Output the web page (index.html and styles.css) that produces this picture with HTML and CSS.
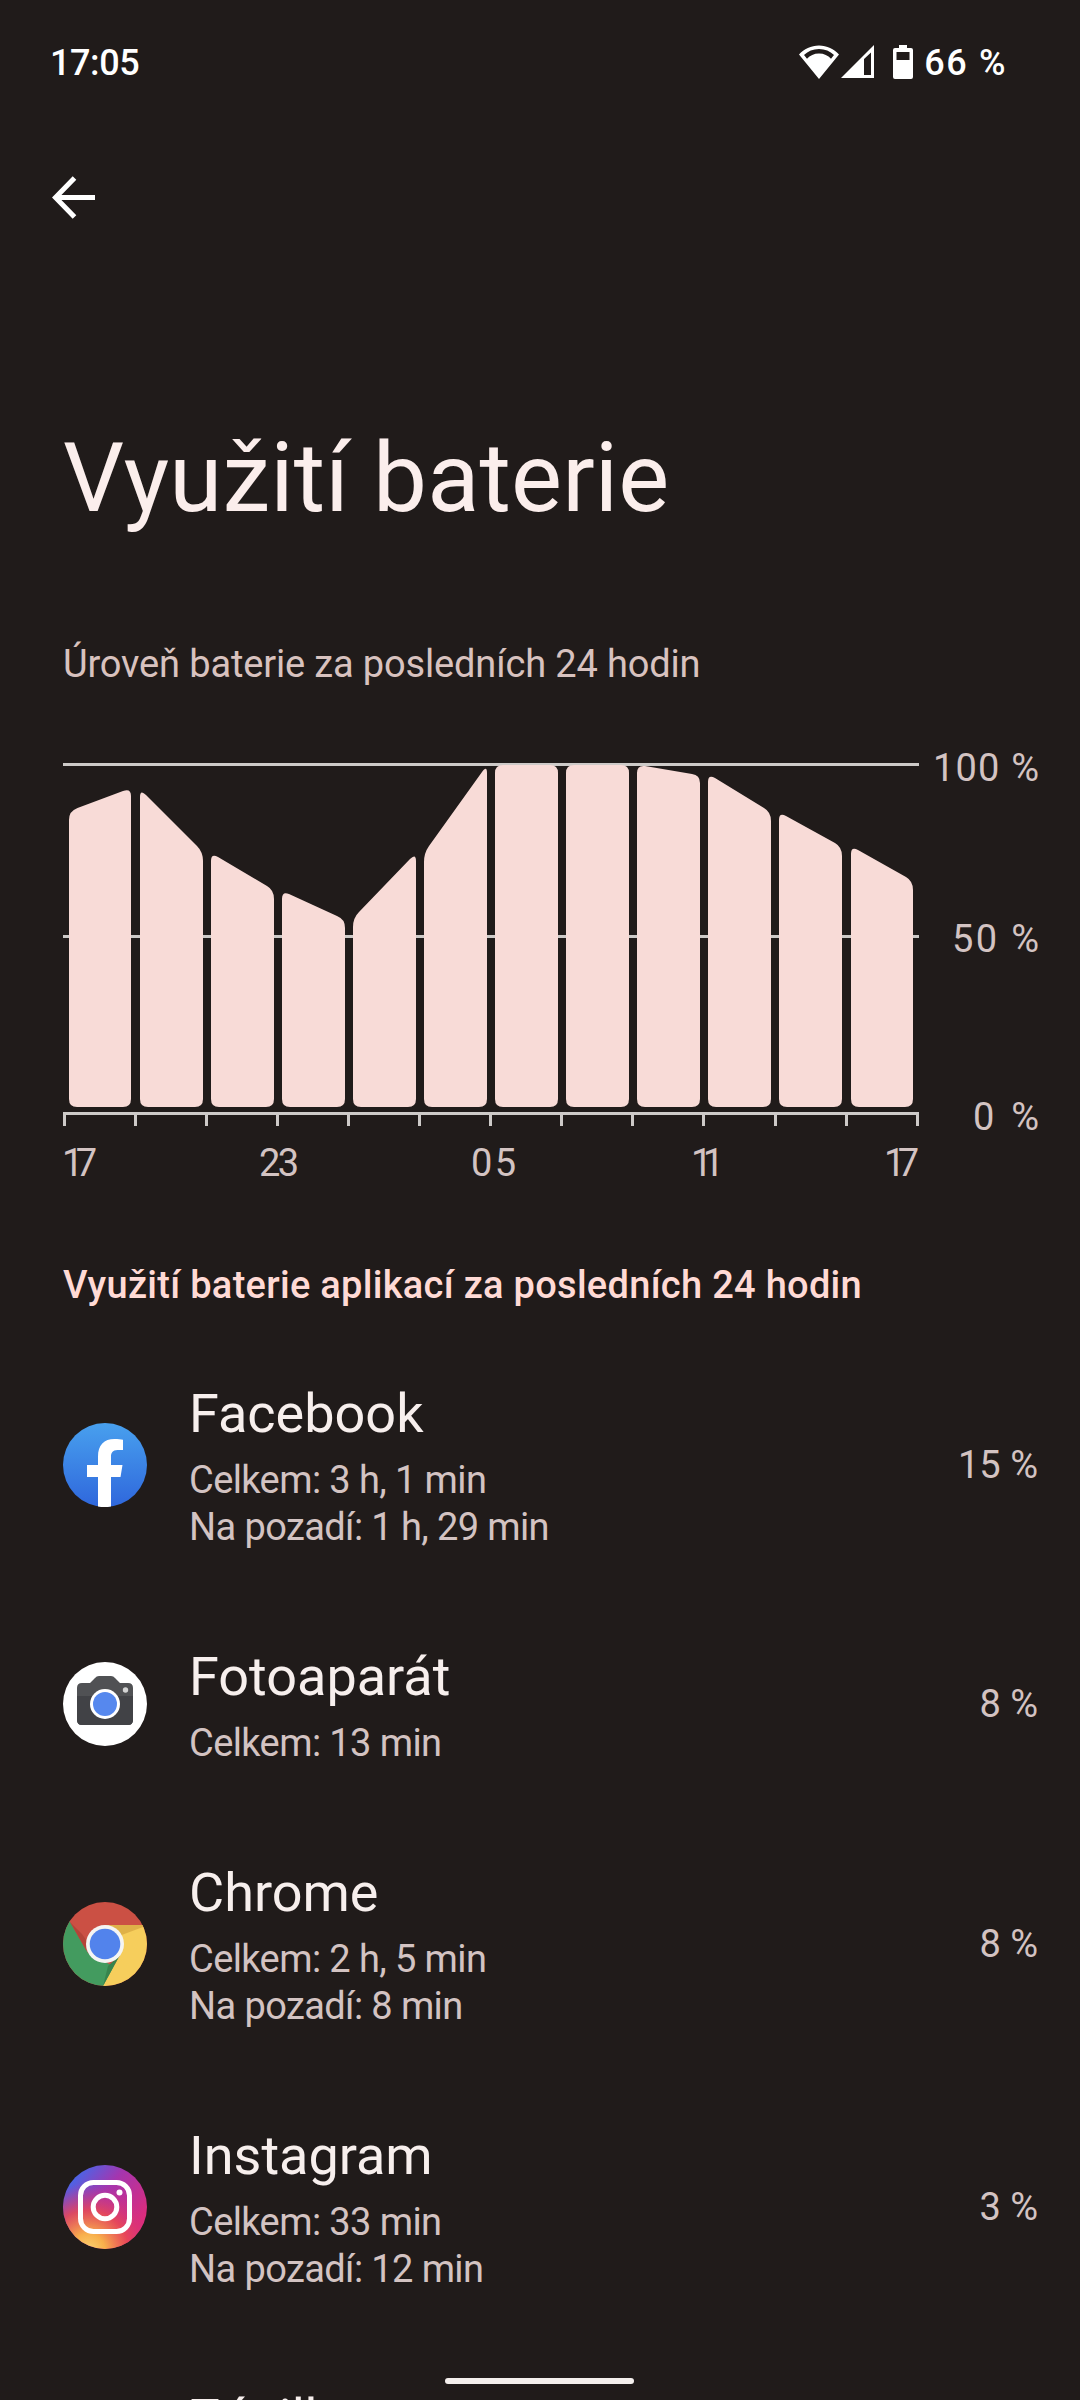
FILE: index.html
```
<!DOCTYPE html>
<html lang="cs">
  <head>
    <meta charset="UTF-8" />
    <title>Využití baterie</title>
    <link rel="stylesheet" href="styles.css">
  </head>
  <body>
    <div class="screen">
      <header class="status-bar">
        <span class="clock">17:05</span>
        <div class="status-icons">
          <svg class="wifi" width="40" height="34" viewBox="0 0 40 34">
            <path fill="#fff" fill-rule="evenodd" d="M0 9.500C5 4 12 .5 20 .5S35 4 40 9.500L20 34zM5 10l3 3.700C11 10.500 15 8.500 20 8.500s9 2 12 5.200L35 10C31 6 26 4 20 4S9 6 5 10z" />
          </svg>
          <svg class="signal" width="34" height="34" viewBox="0 0 34 34">
            <path fill="#fff" fill-rule="evenodd" d="M33 0v33H0zM23 14v16h7V7.500z" />
          </svg>
          <svg class="battery" width="20" height="34" viewBox="0 0 20 34">
            <path fill="#fff" fill-rule="evenodd" d="M6 0h8v3h4a2 2 0 0 1 2 2v27a2 2 0 0 1-2 2H2a2 2 0 0 1-2-2V5a2 2 0 0 1 2-2h4zM3.500 7v8h13V7z" />
          </svg>
          <span class="battery-level">66 %</span>
        </div>
      </header>

      <nav class="toolbar">
        <svg width="43" height="43" viewBox="0 0 43 43" fill="none" stroke="#fff" stroke-width="5">
          <path d="M43 21.500H4M22.500 2L3.500 21.500l19 19.500" />
        </svg>
      </nav>

      <h1 class="title">Využití baterie</h1>
      <p class="summary">Úroveň baterie za posledních 24 hodin</p>

      <svg class="chart" width="1017" height="440" viewBox="63 750 1017 440">
        <!-- grid lines, x axis and its ticks -->
        <path class="grid" d="M63 764.500H919M63 936.500H919M63 1113.500H919" />
        <path class="grid" d="M64.500 1113v13M135.500 1113v13M206.500 1113v13M277.500 1113v13M348.500 1113v13M419.500 1113v13M490.500 1113v13M561.500 1113v13M632.500 1113v13M703.500 1113v13M775.500 1113v13M846.500 1113v13M917.500 1113v13" />
        <!-- one bar for every two hours -->
        <g class="bars">
          <path d="M69 820Q69 811 77.500 808L123 791Q131 788 131 796V1099Q131 1107 123 1107H77Q69 1107 69 1099z" />
          <path d="M140 797Q140 789 146 795L197 846Q203 852 203 861V1099Q203 1107 195 1107H148Q140 1107 140 1099z" />
          <path d="M211 861Q211 853 218 857L267 886Q274 890 274 899V1099Q274 1107 266 1107H219Q211 1107 211 1099z" />
          <path d="M282 899Q282 891 289 894L337 916Q345 919 345 928V1099Q345 1107 337 1107H290Q282 1107 282 1099z" />
          <path d="M353 927Q353 918 359 912L410 859Q416 853 416 861V1099Q416 1107 408 1107H361Q353 1107 353 1099z" />
          <path d="M424 862Q424 853 429 846L482 772Q487 765 487 773V1099Q487 1107 479 1107H432Q424 1107 424 1099z" />
          <path d="M495 773Q495 765 503 765H550Q558 765 558 773V1099Q558 1107 550 1107H503Q495 1107 495 1099z" />
          <path d="M566 773Q566 765 574 765H621Q629 765 629 773V1099Q629 1107 621 1107H574Q566 1107 566 1099z" />
          <path d="M637 773Q637 765 645 766L692 774Q700 775 700 783V1099Q700 1107 692 1107H645Q637 1107 637 1099z" />
          <path d="M708 782Q708 774 715 778L764 808Q771 812 771 821V1099Q771 1107 763 1107H716Q708 1107 708 1099z" />
          <path d="M779 820Q779 812 786 816L835 843Q842 847 842 856V1099Q842 1107 834 1107H787Q779 1107 779 1099z" />
          <path d="M851 854Q851 846 858 850L906 877Q913 881 913 890V1099Q913 1107 905 1107H859Q851 1107 851 1099z" />
        </g>
        <g class="axis-label">
          <text x="933" y="781" textLength="106">100 %</text>
          <text x="952" y="952" textLength="87">50 %</text>
          <text x="973" y="1129.500" textLength="66">0 %</text>
          <text x="62" y="1175.500" textLength="35">17</text>
          <text x="259" y="1175.500" textLength="40">23</text>
          <text x="471" y="1175.500" textLength="45">05</text>
          <text x="691" y="1175.500" textLength="33">11</text>
          <text x="884" y="1175.500" textLength="35">17</text>
        </g>
      </svg>

      <h2 class="section-title">Využití baterie aplikací za posledních 24 hodin</h2>

      <ul class="app-list">
        <li class="app">
          <svg class="app-icon" viewBox="0 0 84 84">
            <defs>
              <linearGradient id="fbBlue" x1="0" y1="0" x2="0" y2="1">
                <stop offset="0" stop-color="#48a0ee" />
                <stop offset="1" stop-color="#2f67dc" />
              </linearGradient>
            </defs>
            <circle cx="42" cy="42" r="42" fill="url(#fbBlue)" />
            <path fill="#fff" d="M35 83.500V54H24V42h11v-8.500C35 22 41 16 51.500 16c3.500 0 6.500.3 8.500.7V27h-5.500c-5 0-6.500 3-6.500 6.500V42h11.500l-2 12H48v29.500q-6.500 1-13 0z" />
          </svg>
          <div class="app-text">
            <div class="app-name">Facebook</div>
            <div class="app-usage">Celkem: 3 h, 1 min</div>
            <div class="app-usage">Na pozadí: 1 h, 29 min</div>
          </div>
          <div class="app-percent">15 %</div>
        </li>
        <li class="app">
          <svg class="app-icon" viewBox="0 0 84 84">
            <circle cx="42" cy="42" r="42" fill="#fff" />
            <path fill="#505154" d="M19 21h8l5-5q1.500-2 4-2h12q2.500 0 4 2l5 5h8q5 0 5 5v32q0 5-5 5H19q-5 0-5-5V26q0-5 5-5z" />
            <path fill="#414246" d="M14 34h56v24q0 5-5 5H19q-5 0-5-5z" />
            <circle cx="42" cy="42" r="15" fill="#fff" />
            <circle cx="42" cy="42" r="12" fill="#5688ee" />
            <circle cx="62.500" cy="28" r="2.700" fill="#d4d4d4" />
          </svg>
          <div class="app-text">
            <div class="app-name">Fotoaparát</div>
            <div class="app-usage">Celkem: 13 min</div>
          </div>
          <div class="app-percent">8 %</div>
        </li>
        <li class="app">
          <svg class="app-icon" viewBox="0 0 84 84">
            <defs>
              <clipPath id="chromeClip"><circle cx="42" cy="42" r="42" /></clipPath>
            </defs>
            <g clip-path="url(#chromeClip)">
              <rect width="84" height="84" fill="#cb5044" />
              <path fill="#439b5f" d="M0 11L7 20l18 31 17 9 10 5-12 21H0z" />
              <path fill="#f6ce5c" d="M42 23h42v61H40l18-33z" />
              <path fill="#dfb148" d="M42 23h38v2L56 34z" />
              <path fill="#b44438" d="M7 20l12 12 7 10-3 6z" />
              <path fill="#37844d" d="M57 53L40 84l5-20z" />
            </g>
            <circle cx="42" cy="42" r="19" fill="#f5f5f3" />
            <circle cx="42" cy="42" r="15.300" fill="#5283ec" />
          </svg>
          <div class="app-text">
            <div class="app-name">Chrome</div>
            <div class="app-usage">Celkem: 2 h, 5 min</div>
            <div class="app-usage">Na pozadí: 8 min</div>
          </div>
          <div class="app-percent">8 %</div>
        </li>
        <li class="app">
          <svg class="app-icon" viewBox="0 0 84 84">
            <defs>
              <linearGradient id="igBase" x1="0.2" y1="0.1" x2="0.9" y2="0.7">
                <stop offset="0" stop-color="#4f62e4" />
                <stop offset="0.4" stop-color="#a535ae" />
                <stop offset="1" stop-color="#dc2c7c" />
              </linearGradient>
              <radialGradient id="igWarm" cx="0.3" cy="1.02" r="0.8">
                <stop offset="0" stop-color="#fbd474" />
                <stop offset="0.25" stop-color="#f8b04c" />
                <stop offset="0.6" stop-color="#ea4a52" stop-opacity="0.85" />
                <stop offset="1" stop-color="#d02f88" stop-opacity="0" />
              </radialGradient>
            </defs>
            <circle cx="42" cy="42" r="42" fill="url(#igBase)" />
            <circle cx="42" cy="42" r="42" fill="url(#igWarm)" />
            <rect x="17.500" y="17.500" width="49" height="49" rx="13" fill="none" stroke="#fff" stroke-width="5" />
            <circle cx="42" cy="42" r="11.800" fill="none" stroke="#fff" stroke-width="5" />
            <circle cx="56.500" cy="27.500" r="3" fill="#fff" />
          </svg>
          <div class="app-text">
            <div class="app-name">Instagram</div>
            <div class="app-usage">Celkem: 33 min</div>
            <div class="app-usage">Na pozadí: 12 min</div>
          </div>
          <div class="app-percent">3 %</div>
        </li>
        <li class="app">
          <div class="app-icon"></div>
          <div class="app-text">
            <div class="app-name">Zásilkovna</div>
          </div>
        </li>
      </ul>

      <div class="nav-handle"></div>
    </div>
  </body>
</html>
```

FILE: styles.css
```
* {
  margin: 0;
  padding: 0;
  box-sizing: border-box;
}

body {
  background-color: #201b1a;
  font-family: Roboto, "Open Sans", sans-serif;
}

.screen {
  position: relative;
  width: 1080px;
  height: 2400px;
  overflow: hidden;
  display: flex;
  flex-direction: column;
}

/* Status bar */
.status-bar {
  display: flex;
  flex-shrink: 0;
  justify-content: space-between;
  align-items: center;
  height: 124px;
  padding: 0 73px 0 50px;
  color: white;
  font-size: 36px;
  font-weight: 500;
}

.clock {
  padding-top: 2px;
  letter-spacing: -0.4px;
}

.status-icons {
  display: flex;
  align-items: center;
}

.signal {
  margin-left: 2px;
}

.battery {
  margin-left: 18px;
}

.battery-level {
  margin-left: 11px;
  padding-top: 2px;
  letter-spacing: 1.6px;
}

.toolbar {
  flex-shrink: 0;
  height: 147px;
  padding: 52px 52px;
}

/* Heading */
.title {
  flex-shrink: 0;
  height: 278px;
  padding: 151px 0 0 63px;
  color: #fbeeec;
  font-size: 96px;
  font-weight: 400;
  letter-spacing: 0.15px;
  line-height: 113px;
}

.summary {
  flex-shrink: 0;
  height: 201px;
  padding: 92px 0 0 63px;
  color: #d8c2bf;
  font-size: 38px;
  letter-spacing: -0.15px;
  line-height: 46px;
}

/* Chart */
.chart {
  display: block;
  flex-shrink: 0;
  margin-left: 63px;
}

.grid {
  stroke: #cdcac8;
  stroke-width: 3;
}

.bars {
  fill: #f8dbd7;
}

.axis-label {
  fill: #d3c3c2;
  font-size: 38px;
}

/* App list */
.section-title {
  flex-shrink: 0;
  height: 143px;
  padding: 72px 0 0 63px;
  color: #ffdad5;
  font-size: 38px;
  font-weight: 500;
  letter-spacing: 0.29px;
  line-height: 46px;
}

.app-list {
  list-style: none;
}

.app {
  display: flex;
  align-items: center;
  padding: 0 42px 0 63px;
}

.app-icon {
  flex-shrink: 0;
  width: 84px;
  height: 84px;
}

.app-text {
  flex: 1;
  padding: 41px 0 45px 42px;
}

.app-name {
  margin-bottom: 3px;
  color: #f7efed;
  font-size: 54px;
  line-height: 80px;
}

.app-usage {
  color: #d3c3c2;
  font-size: 38px;
  letter-spacing: -0.6px;
  line-height: 47px;
}

.app-percent {
  color: #d3c3c2;
  font-size: 38px;
}

/* Gesture navigation handle */
.nav-handle {
  position: absolute;
  left: 445px;
  bottom: 16px;
  width: 189px;
  height: 6px;
  border-radius: 3px;
  background-color: #f4efed;
}
```
